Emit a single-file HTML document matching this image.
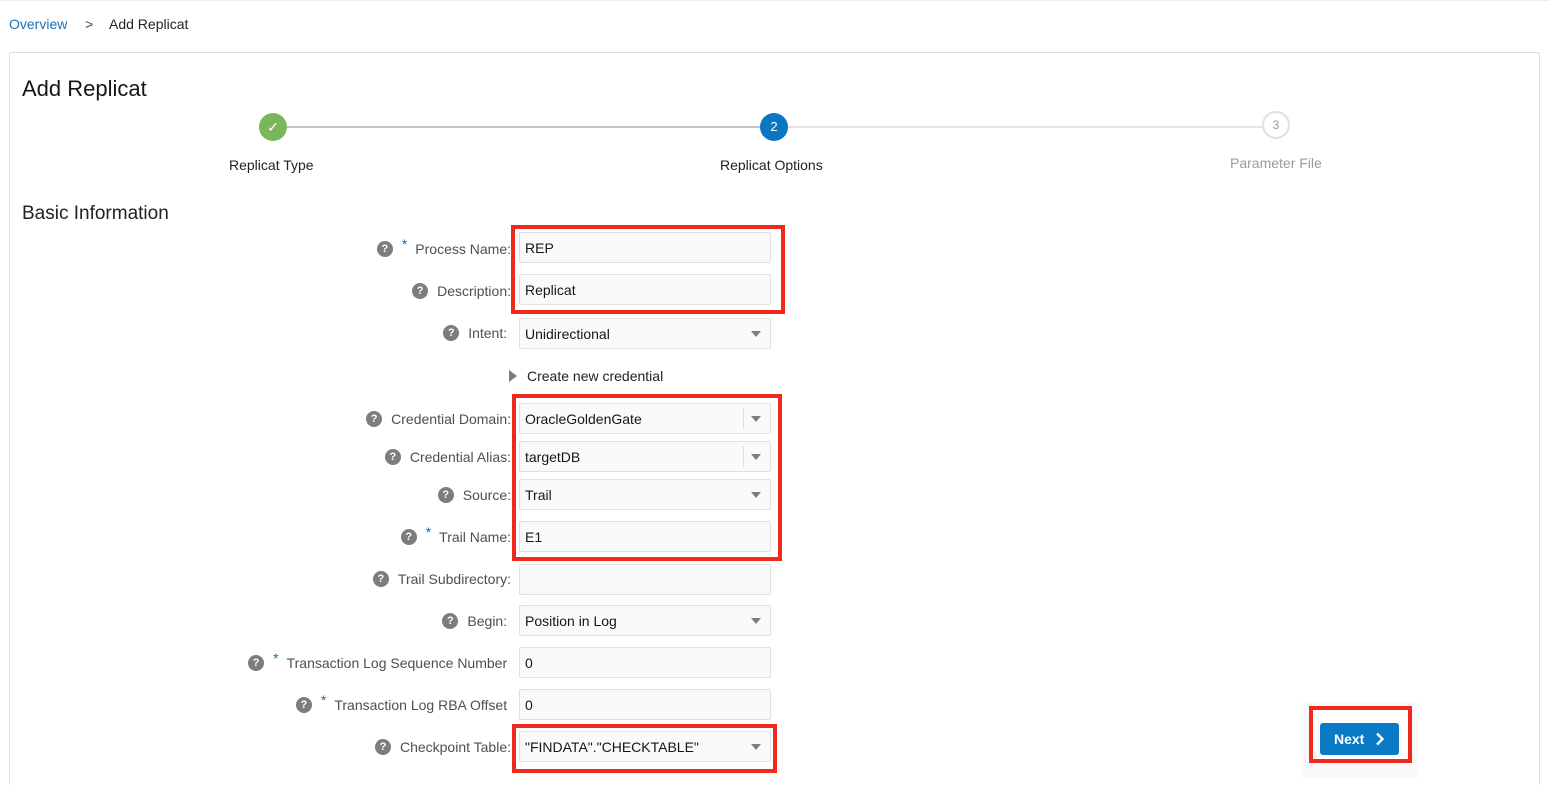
<!DOCTYPE html>
<html style="width:1549px;height:785px;overflow:hidden"><head><meta charset="utf-8"><style>
*{box-sizing:border-box;margin:0;padding:0}
body{width:1549px;height:785px;background:#fff;font-family:"Liberation Sans",sans-serif;position:relative;overflow:hidden;color:#161513}
.a{position:absolute}
.panel{left:9px;top:52px;width:1531px;height:740px;border:1px solid #dedede;border-radius:2px}
.lbl{position:absolute;right:1038px;height:20px;display:flex;align-items:center;font-size:14px;color:#4f4f4f;white-space:nowrap}
.lbl .q{width:16px;height:16px;border-radius:50%;background:#7d7d7d;color:#fff;font-size:11px;font-weight:bold;display:flex;align-items:center;justify-content:center;margin-right:9px}
.lbl .s{color:#0b6fb6;font-size:14px;margin-right:8px;position:relative;top:-5px}
.f{position:absolute;left:519px;width:252px;height:31px;background:#fafafa;border:1px solid #e0e0e0;border-radius:2px;font-size:14px;color:#161513;padding-left:5px;line-height:31px}
.f .ar{position:absolute;right:9px;top:12px;width:0;height:0;border-left:5px solid transparent;border-right:5px solid transparent;border-top:6px solid #7d7d7d}
.f .sep{position:absolute;right:26px;top:4px;width:1px;height:21px;background:#e0e0e0}
.red{position:absolute;border:4px solid #f0281e}
</style></head><body>
<div class="a" style="left:0;top:0;width:1549px;height:1px;background:#eee"></div>
<div class="a" style="left:9px;top:16px;font-size:14px;color:#1a73b5">Overview</div>
<div class="a" style="left:85px;top:16px;font-size:14px;color:#444">&gt;</div>
<div class="a" style="left:109px;top:16px;font-size:14px;color:#222">Add Replicat</div>
<div class="a panel"></div>
<div class="a" style="left:22px;top:76px;font-size:22px;color:#161513">Add Replicat</div>

<div class="a" style="left:287px;top:126px;width:473px;height:2px;background:#c4c4c4"></div>
<div class="a" style="left:788px;top:126px;width:474px;height:2px;background:#e3e3e3"></div>
<div class="a" style="left:259px;top:113px;width:28px;height:28px;border-radius:50%;background:#7cb65b;color:#fff;font-size:14px;text-align:center;line-height:28px">&#10003;</div>
<div class="a" style="left:760px;top:113px;width:28px;height:28px;border-radius:50%;background:#0b76c4;color:#fff;font-size:13px;text-align:center;line-height:28px">2</div>
<div class="a" style="left:1262px;top:111px;width:28px;height:28px;border-radius:50%;background:#fff;border:2px solid #e0e0e0;color:#9a9a9a;font-size:12px;text-align:center;line-height:24px">3</div>
<div class="a" style="left:229px;top:157px;font-size:14px;color:#222">Replicat Type</div>
<div class="a" style="left:720px;top:157px;font-size:14px;color:#222">Replicat Options</div>
<div class="a" style="left:1230px;top:155px;font-size:14px;color:#9a9a9a">Parameter File</div>

<div class="a" style="left:22px;top:203px;font-size:19px;color:#222">Basic Information</div>

<div class="lbl" style="top:239px"><span class="q">?</span><span class="s">*</span>Process Name:</div>
<div class="f" style="top:232px">REP</div>
<div class="lbl" style="top:281px"><span class="q">?</span>Description:</div>
<div class="f" style="top:274px">Replicat</div>
<div class="lbl" style="top:323px"><span class="q">?</span>Intent:&nbsp;</div>
<div class="f" style="top:318px">Unidirectional<span class="ar"></span></div>

<div class="a" style="left:509px;top:370px;width:0;height:0;border-top:6px solid transparent;border-bottom:6px solid transparent;border-left:8px solid #7d7d7d"></div>
<div class="a" style="left:527px;top:368px;font-size:14px;color:#222">Create new credential</div>

<div class="lbl" style="top:409px"><span class="q">?</span>Credential Domain:</div>
<div class="f" style="top:403px">OracleGoldenGate<span class="sep"></span><span class="ar"></span></div>
<div class="lbl" style="top:447px"><span class="q">?</span>Credential Alias:</div>
<div class="f" style="top:441px">targetDB<span class="sep"></span><span class="ar"></span></div>
<div class="lbl" style="top:485px"><span class="q">?</span>Source:</div>
<div class="f" style="top:479px">Trail<span class="ar"></span></div>
<div class="lbl" style="top:527px"><span class="q">?</span><span class="s">*</span>Trail Name:</div>
<div class="f" style="top:521px">E1</div>
<div class="lbl" style="top:569px"><span class="q">?</span>Trail Subdirectory:</div>
<div class="f" style="top:564px"></div>
<div class="lbl" style="top:611px"><span class="q">?</span>Begin:&nbsp;</div>
<div class="f" style="top:605px">Position in Log<span class="ar"></span></div>
<div class="lbl" style="top:653px"><span class="q">?</span><span class="s">*</span>Transaction Log Sequence Number&nbsp;</div>
<div class="f" style="top:647px">0</div>
<div class="lbl" style="top:695px"><span class="q">?</span><span class="s">*</span>Transaction Log RBA Offset&nbsp;</div>
<div class="f" style="top:689px">0</div>
<div class="lbl" style="top:737px"><span class="q">?</span>Checkpoint Table:</div>
<div class="f" style="top:731px">"FINDATA"."CHECKTABLE"<span class="ar"></span></div>

<div class="red" style="left:511px;top:225px;width:274px;height:89px"></div>
<div class="red" style="left:512px;top:394px;width:270px;height:167px"></div>
<div class="red" style="left:512px;top:724px;width:265px;height:49px"></div>

<div class="a" style="left:1302px;top:702px;width:115px;height:76px;background:#f8f8f8"></div>
<div class="a" style="left:1309px;top:706px;width:103px;height:57px;background:#fff"></div>
<div class="red" style="left:1309px;top:706px;width:103px;height:57px"></div>
<div class="a" style="left:1320px;top:723px;width:79px;height:32px;background:#0b7ac6;border-radius:3px;color:#fff;font-size:14px;font-weight:bold;line-height:32px;padding-left:14px">Next
<svg style="position:absolute;left:55px;top:9px" width="10" height="14" viewBox="0 0 10 14"><path d="M2 1.5 L7.5 7 L2 12.5" stroke="#fff" stroke-width="2.4" fill="none"/></svg></div>
</body></html>
